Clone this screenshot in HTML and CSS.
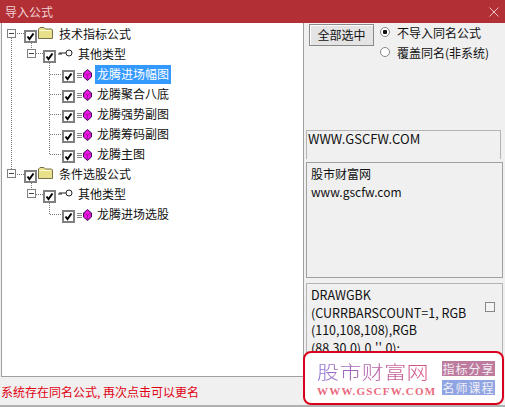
FILE: index.html
```html
<!DOCTYPE html>
<html lang="zh-CN">
<head>
    <meta charset="UTF-8">
    <title>导入公式</title>
    <link rel="stylesheet" href="styles.css">
</head>
<body>
    <svg class="defs">
        <defs>
            <symbol id="check" viewBox="0 0 13 13">
                <rect x="1" y="1" width="11" height="11" fill="#fff" stroke="#808080" stroke-width="2"/>
                <path d="M3.5 6.5 L5.5 9 L9.5 3.5" fill="none" stroke="#000" stroke-width="2"/>
            </symbol>
            <symbol id="folder" viewBox="0 0 15 12">
                <path d="M0.5 11.5 V2 L2 0.5 H6 L7.5 2 H13.5 L14.5 3 V11.5 Z" fill="#e8e08a" stroke="#77704a"/>
                <path d="M1.5 3.5 H13" stroke="#fffbd0"/>
            </symbol>
            <symbol id="key" viewBox="0 0 15 8">
                <circle cx="11" cy="4" r="3" fill="#fff" stroke="#222"/>
                <path d="M8 4 H1 V6 M3 4 V6" fill="none" stroke="#222"/>
            </symbol>
            <symbol id="gem" viewBox="0 0 15 12">
                <path d="M0 4.5 H5 M0 6.5 H5 M0 8.5 H5" stroke="#888"/>
                <path d="M10.5 0.5 L14.5 4 V8 L10.5 11.5 L6.5 8 V4 Z" fill="#ec10e0" stroke="#3c1058"/>
                <path d="M6.5 4 L10.5 6 L14.5 4 M10.5 6 V11.5" fill="none" stroke="#8a1090" stroke-width="0.7"/>
            </symbol>
        </defs>
    </svg>

    <div class="dialog">
        <div class="title_bar">
            <span>导入公式</span>
            <svg class="close_icon" width="10" height="10" viewBox="0 0 10 10"><path d="M0.5 0.5 L9.5 9.5 M9.5 0.5 L0.5 9.5" stroke="#e9c5c7"/></svg>
        </div>
        <div class="main">
            <div class="left">
                <div class="tree">
                    <!-- 树的虚线 -->
                    <svg class="tree_lines" width="110" height="210">
                        <path d="M9.5 15 V151 M15 10.5 H22 M29.5 20 V27 M34 30.5 H41 M47.5 40 V131 M48 51.5 H60 M48 71.5 H60 M48 91.5 H60 M48 111.5 H60 M48 131.5 H60 M15 151.5 H22 M29.5 160 V167 M34 171.5 H41 M47.5 180 V191 M48 191.5 H60" fill="none" stroke="#777" stroke-dasharray="1 1"/>
                    </svg>

                    <div class="row row_1"><i class="expander"></i><svg class="cb"><use href="#check"/></svg><svg class="ico_folder"><use href="#folder"/></svg><span class="label">技术指标公式</span></div>
                    <div class="row row_2"><i class="expander"></i><svg class="cb"><use href="#check"/></svg><svg class="ico_key"><use href="#key"/></svg><span class="label">其他类型</span></div>
                    <div class="row row_3"><svg class="cb"><use href="#check"/></svg><svg class="ico_gem"><use href="#gem"/></svg><span class="label selected">龙腾进场幅图</span></div>
                    <div class="row row_3"><svg class="cb"><use href="#check"/></svg><svg class="ico_gem"><use href="#gem"/></svg><span class="label">龙腾聚合八底</span></div>
                    <div class="row row_3"><svg class="cb"><use href="#check"/></svg><svg class="ico_gem"><use href="#gem"/></svg><span class="label">龙腾强势副图</span></div>
                    <div class="row row_3"><svg class="cb"><use href="#check"/></svg><svg class="ico_gem"><use href="#gem"/></svg><span class="label">龙腾筹码副图</span></div>
                    <div class="row row_3"><svg class="cb"><use href="#check"/></svg><svg class="ico_gem"><use href="#gem"/></svg><span class="label">龙腾主图</span></div>
                    <div class="row row_1"><i class="expander"></i><svg class="cb"><use href="#check"/></svg><svg class="ico_folder"><use href="#folder"/></svg><span class="label">条件选股公式</span></div>
                    <div class="row row_2"><i class="expander"></i><svg class="cb"><use href="#check"/></svg><svg class="ico_key"><use href="#key"/></svg><span class="label">其他类型</span></div>
                    <div class="row row_3"><svg class="cb"><use href="#check"/></svg><svg class="ico_gem"><use href="#gem"/></svg><span class="label">龙腾进场选股</span></div>
                </div>
                <div class="status">系统存在同名公式, 再次点击可以更名</div>
            </div>

            <div class="right">
                <div class="top_area">
                    <div class="btn">全部选中</div>
                    <div class="radios">
                        <div class="radio_row"><i class="radio on"></i>不导入同名公式</div>
                        <div class="radio_row"><i class="radio"></i>覆盖同名(非系统)</div>
                    </div>
                </div>
                <div class="name_box">WWW.GSCFW.COM</div>
                <div class="info_box">股市财富网<br>www.gscfw.com</div>
                <div class="code_box">
                    <div class="code_text">DRAWGBK<br>(CURRBARSCOUNT=1, RGB<br>(110,108,108),RGB<br>(88,30,0),0,'',0);</div>
                    <i class="small_cb"></i>
                </div>
            </div>
        </div>

        <!-- 水印 盖在右下角 -->
        <div class="stamp">
            <div class="stamp_left">
                <div class="stamp_name">股市财富网</div>
                <div class="stamp_url">WWW.GSCFW.COM</div>
            </div>
            <div class="stamp_tags">
                <div class="tag tag_pink">指标分享</div>
                <div class="tag tag_blue">名师课程</div>
            </div>
        </div>
    </div>
</body>
</html>
```

FILE: styles.css
```css
*{
    margin: 0;
    padding: 0;
    box-sizing: border-box;
}
body{
    width: 505px;
    height: 407px;
    overflow: hidden;
    font-family: "Noto Sans CJK SC", "Noto Sans", sans-serif;
    font-size: 12px;
    color: #111;
    background-color: #f0f0f0;
}
.defs{
    display: none;
}
.dialog{
    position: relative;
    width: 505px;
    height: 407px;
    display: flex;
    flex-direction: column;
    border-bottom: 2px solid #b0b0b0;
}
.title_bar{
    height: 23px;
    flex: none;
    background-color: #b32f36;
    color: #eed3d5;
    padding-left: 5px;
    display: flex;
    align-items: center;
    justify-content: space-between;
    padding-right: 6px;
    line-height: 18px;
}
.main{
    flex: 1;
    display: flex;
    min-height: 0;
}
.left{
    width: 304px;
    flex: none;
    display: flex;
    flex-direction: column;
}
.tree{
    position: relative;
    flex: 1;
    margin-left: 1px;
    background-color: #fff;
    border: 1px solid #a0a0a0;
    border-top: none;
    padding-top: 1px;
}
.tree_lines{
    position: absolute;
    left: 0;
    top: 0;
}
.row{
    position: relative;
    height: 20px;
    display: flex;
    align-items: center;
    white-space: nowrap;
}
.row_1{
    padding-left: 5px;
}
.row_2{
    padding-left: 25px;
}
.row_3{
    padding-left: 60px;
}
.expander{
    width: 9px;
    height: 9px;
    margin-top: -1px;
    border: 1px solid #808080;
    background: linear-gradient(#444, #444) center / 5px 1px no-repeat #fff;
    margin-right: 8px;
}
.row_2 .expander{
    margin-right: 7px;
}
.cb{
    width: 13px;
    height: 13px;
    margin-top: 4px;
}
.ico_folder{
    width: 15px;
    height: 12px;
    margin: -3px 6px 0 1px;
}
.ico_key{
    width: 15px;
    height: 8px;
    margin: -2px 5px 0 2px;
}
.ico_gem{
    width: 15px;
    height: 12px;
    margin: 1px 5px 0 2px;
}
.label{
    line-height: 18px;
}
.selected{
    background-color: #3399ff;
    color: #fff;
    margin-left: -2px;
    padding: 0 2px;
    height: 19px;
}
.status{
    height: 28px;
    flex: none;
    padding-left: 1px;
    line-height: 30px;
    color: #e00012;
}
.right{
    flex: 1;
    padding-left: 2px;
    min-width: 0;
}
.top_area{
    height: 107px;
    display: flex;
    align-items: flex-start;
    padding-left: 3px;
}
.btn{
    width: 65px;
    height: 22px;
    margin-top: 1px;
    text-align: center;
    line-height: 20px;
    background-color: #e4e4e4;
    border: 1px solid #8a8a8a;
    box-shadow: inset 1px 1px 0 #fff;
}
.radios{
    margin-left: 4px;
    margin-top: -1px;
}
.radio_row{
    height: 20px;
    display: flex;
    align-items: center;
    white-space: nowrap;
}
.radio{
    width: 10px;
    height: 10px;
    border-radius: 50%;
    background-color: #fff;
    border: 1px solid #888;
    margin: 0 7px 0 2px;
}
.radio.on{
    background: radial-gradient(circle, #111 0 2px, #fff 2.5px);
}
.name_box{
    height: 29px;
    width: 195px;
    padding-left: 1px;
    border: 1px solid #b4b4b4;
    border-bottom: none;
    font-size: 13px;
    line-height: 16px;
}
.info_box{
    height: 116px;
    width: 197px;
    margin-top: 3px;
    padding: 2px 4px;
    border: 1px solid #a0a0a0;
    line-height: 18px;
}
.code_box{
    height: 90px;
    width: 197px;
    margin-top: 5px;
    padding: 2px 4px;
    border: 1px solid #b4b4b4;
    display: flex;
    justify-content: space-between;
    font-size: 12.5px;
    line-height: 17.5px;
    overflow: hidden;
}
.code_text{
    height: 66px;
    overflow: hidden;
}
.small_cb{
    flex: none;
    width: 10px;
    height: 10px;
    margin: 16px 3px 0 0;
    border: 1px solid #888;
    background-color: #f4f4f4;
}
.stamp{
    position: absolute;
    left: 303px;
    top: 351px;
    width: 201px;
    height: 54px;
    background-color: #fff;
    border: 2px solid #d8001c;
    border-radius: 8px;
    display: flex;
    justify-content: space-between;
    padding: 6px 7px 0 12px;
}
.stamp_name{
    font-size: 22px;
    font-weight: 300;
    line-height: 24px;
    letter-spacing: 0.4px;
    transform: scaleY(0.85);
    background: linear-gradient(90deg, #8c6fd0, #e0507a);
    -webkit-background-clip: text;
    background-clip: text;
    color: transparent;
}
.stamp_url{
    font-family: "Liberation Serif", serif;
    font-size: 11px;
    font-weight: bold;
    letter-spacing: 1.2px;
    color: #e96a80;
    line-height: 14px;
    margin-top: 1px;
    white-space: nowrap;
}
.stamp_tags{
    display: flex;
    flex-direction: column;
    gap: 4px;
    padding-top: 2px;
}
.tag{
    width: 53px;
    height: 15px;
    line-height: 15px;
    text-align: center;
    color: #f2eef5;
    font-size: 12px;
    letter-spacing: 1px;
    white-space: nowrap;
}
.tag_pink{
    background-color: #bd7b9d;
}
.tag_blue{
    background-color: #8fa5e3;
}
```
